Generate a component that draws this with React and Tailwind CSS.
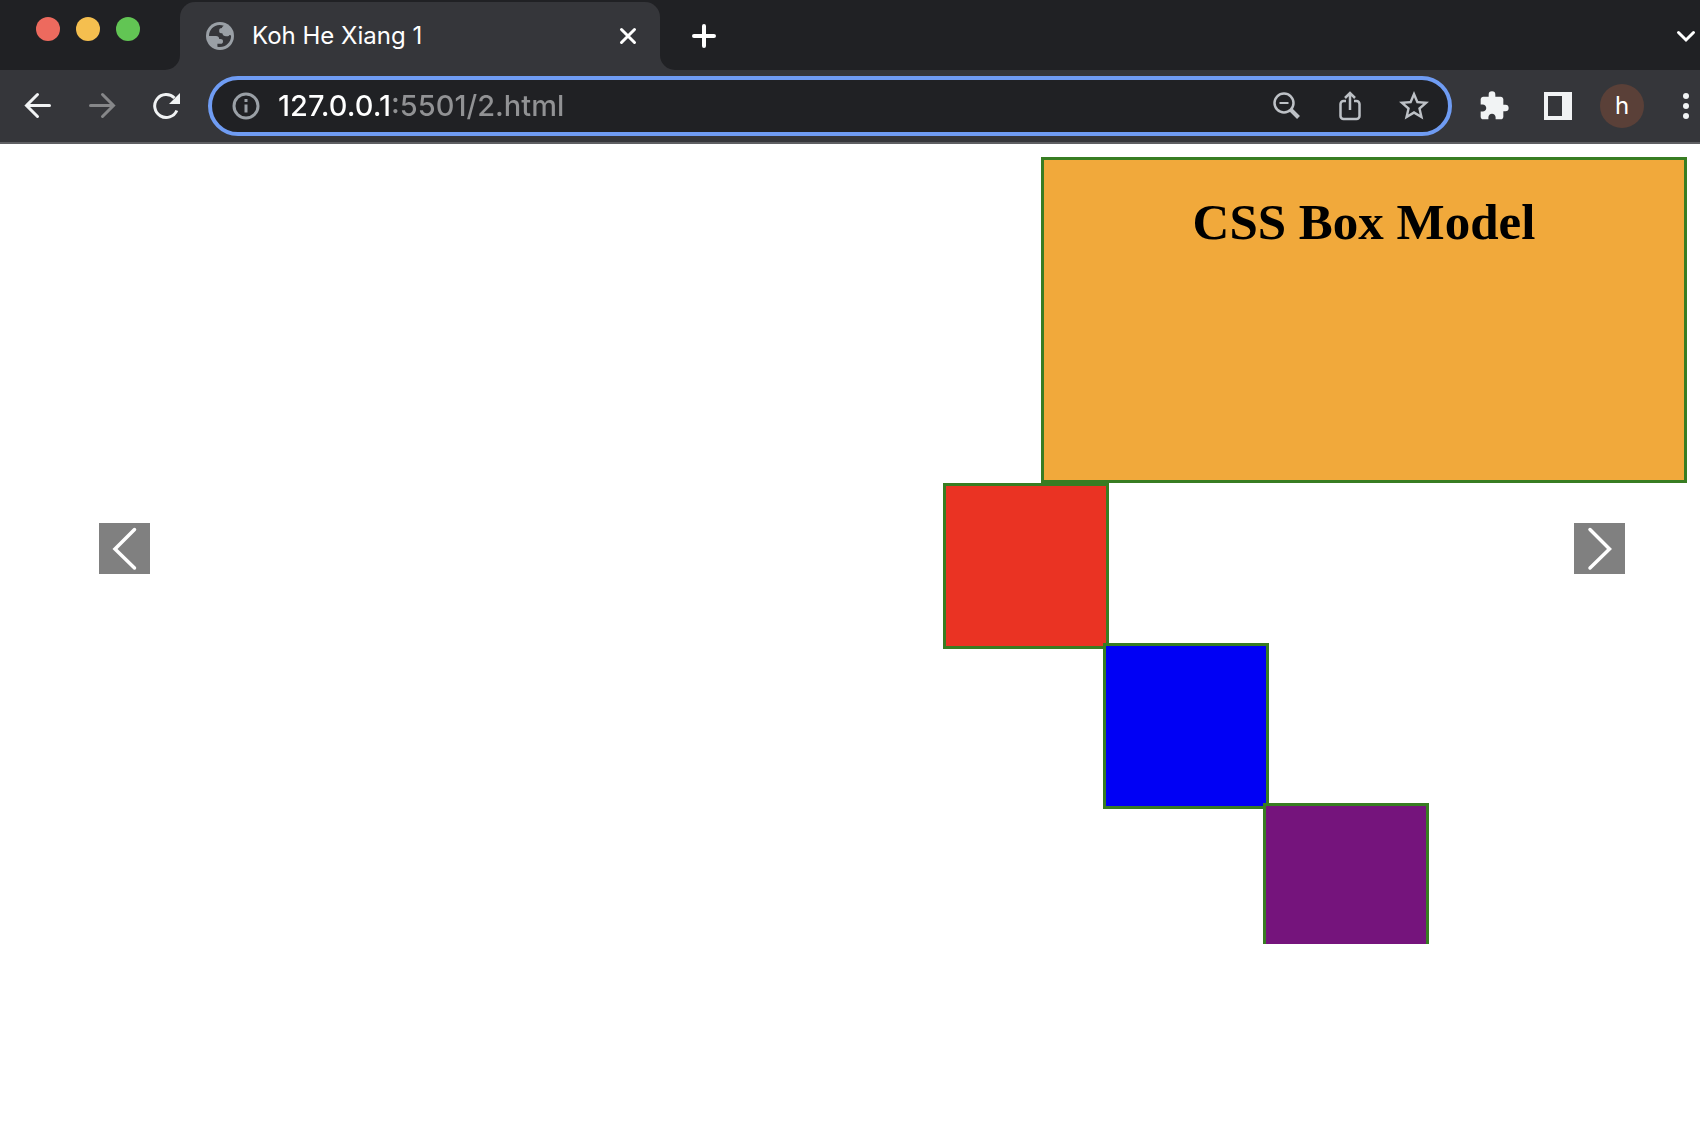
import { MdExtension, MdStarBorder } from "react-icons/md";

const iconButton = "flex shrink-0 items-center justify-center";

function Stroke({ className, children, width = 3, cap = "round", box = "0 0 32 32" }) {
  return (
    <svg
      viewBox={box}
      className={className}
      fill="none"
      stroke="currentColor"
      strokeWidth={width}
      strokeLinecap={cap}
      aria-hidden="true"
    >
      {children}
    </svg>
  );
}

function Globe() {
  return (
    <svg viewBox="0 0 28 28" className="size-7 shrink-0" aria-hidden="true">
      <circle cx="14" cy="14" r="14" fill="#9aa0a6" />
      <path
        d="M3 14C3 8 7.500 3.300 13.500 3c1.500 0 3 .2 4.300.7-1 .5-1.800 1.300-1.800 2.300-1.600 0-2.800.8-2.800 2.200v1.400c0 1 .8 1.700 1.800 1.700h1.300c.3 1.900 1.700 3 3.700 3h1.300c1 0 1.800-.6 2.200-1.400.9 0 1.500.4 1.600 1.100C25 20.300 20 25 14 25c-.9 0-1.800-.1-2.600-.3v-3h3.200c1.500 0 2.400-.9 2.400-2.300 0-1.600-.9-2.400-2.500-2.400h-1.300c0-2-1.200-3-3.200-3z"
        fill="#35363a"
      />
    </svg>
  );
}

function TabStrip() {
  return (
    <header className="flex h-[70px] items-end bg-[#202124] text-white">
      <div className="flex w-[165px] shrink-0 gap-4 self-start pl-9 pt-[17px]">
        <button aria-label="Close window" className="size-6 rounded-full bg-[#ed6a5e]" />
        <button aria-label="Minimize window" className="size-6 rounded-full bg-[#f5bf4f]" />
        <button aria-label="Zoom window" className="size-6 rounded-full bg-[#62c554]" />
      </div>
      <div className="size-[15px] shrink-0 bg-[#35363a]">
        <div className="size-full rounded-br-[15px] bg-[#202124]" />
      </div>
      <div className="flex h-[68px] w-[480px] shrink-0 items-center rounded-t-[15px] bg-[#35363a] pl-[26px] pr-5">
        <Globe />
        <span className="ml-[18px] flex-1 text-2xl">Koh He Xiang 1</span>
        <button aria-label="Close tab" className={`${iconButton} size-6`}>
          <Stroke className="size-6" box="0 0 24 24">
            <path d="M5.500 5.500l13 13M18.500 5.500l-13 13" />
          </Stroke>
        </button>
      </div>
      <div className="size-[15px] shrink-0 bg-[#35363a]">
        <div className="size-full rounded-bl-[15px] bg-[#202124]" />
      </div>
      <div className="flex h-[68px] flex-1 items-center justify-between pl-[13px]">
        <button aria-label="New tab" className={`${iconButton} size-8`}>
          <Stroke className="size-8" width={4}>
            <path d="M16 6v20M6 16h20" />
          </Stroke>
        </button>
        <button aria-label="Search tabs" className={`${iconButton} w-7`}>
          <Stroke className="size-7" box="0 0 28 28">
            <path d="M6.500 10.500l7.500 7.500 7.500-7.500" />
          </Stroke>
        </button>
      </div>
    </header>
  );
}

function Toolbar() {
  return (
    <nav className="flex h-[74px] items-center border-b-2 border-[#5f6063] bg-[#35363a] pl-[22px] text-[#f1f3f4]">
      <button aria-label="Back" className={`${iconButton} size-8`}>
        <Stroke className="size-8">
          <path d="M27.500 15.500H4.500M15.500 4.500l-11 11 11 11" />
        </Stroke>
      </button>
      <button aria-label="Forward" className={`${iconButton} ml-8 size-8 text-[#868789]`}>
        <Stroke className="size-8">
          <path d="M4.500 15.500h23M16.500 4.500l11 11-11 11" />
        </Stroke>
      </button>
      <button aria-label="Reload" className={`${iconButton} ml-8 size-8`}>
        <Stroke className="size-8" width={3} cap="butt">
          <path d="M26.800 20.500A11.500 11.500 0 1 1 24.500 8" />
          <path d="M30 3v11H19z" fill="currentColor" stroke="none" />
        </Stroke>
      </button>
      <div className="ml-[26px] flex h-[60px] flex-1 items-center rounded-full border-4 border-[#6f9cf3] bg-[#202124] pl-5 pr-[18px] text-[#bdc1c6]">
        <Stroke className="size-7 shrink-0 text-[#9aa0a6]" box="0 0 28 28" width={3} cap="butt">
          <circle cx="14" cy="14" r="12" />
          <path d="M14 12.500v8M14 7v3" />
        </Stroke>
        <input
          aria-label="Address"
          defaultValue="127.0.0.1:5501/2.html"
          className="ml-[18px] min-w-0 flex-1 bg-[linear-gradient(90deg,#fff_113px,#919294_113px)] bg-clip-text text-[29px] font-medium text-transparent caret-white outline-none"
        />
        <div className="flex items-center gap-8">
          <button aria-label="Zoom" className={`${iconButton} size-8`}>
            <Stroke className="size-8" cap="butt" width={2.5}>
              <circle cx="14" cy="13" r="9.500" />
              <path d="M9.500 13h9" strokeWidth="2" />
              <path d="M20.500 19.500l8 8" strokeWidth="4" />
            </Stroke>
          </button>
          <button aria-label="Share" className={`${iconButton} size-8`}>
            <Stroke className="size-8" cap="butt" width={2.5}>
              <path d="M12 11H9.500a3 3 0 0 0-3 3v12a3 3 0 0 0 3 3h13a3 3 0 0 0 3-3V14a3 3 0 0 0-3-3H20" />
              <path d="M16 20V3M11 8l5-5 5 5" />
            </Stroke>
          </button>
          <button aria-label="Bookmark" className={`${iconButton} size-8`}>
            <MdStarBorder className="size-9 shrink-0" />
          </button>
        </div>
      </div>
      <button aria-label="Extensions" className={`${iconButton} ml-[26px] size-8`}>
        <MdExtension className="size-8" />
      </button>
      <button aria-label="Side panel" className={`${iconButton} ml-[34px] size-7`}>
        <span className="size-7 border-4 border-r-[10px] border-[#f1f3f4]" />
      </button>
      <button
        aria-label="Profile"
        className={`${iconButton} ml-7 size-11 rounded-full bg-[#5a4038] text-2xl text-white`}
      >
        h
      </button>
      <button aria-label="Menu" className={`${iconButton} ml-7 w-7 flex-col gap-1`}>
        <span className="size-1.5 rounded-full bg-[#f1f3f4]" />
        <span className="size-1.5 rounded-full bg-[#f1f3f4]" />
        <span className="size-1.5 rounded-full bg-[#f1f3f4]" />
      </button>
    </nav>
  );
}

const square = "size-[166px] border-3 border-[#387d22]";

export default function App() {
  return (
    <div className="min-h-screen bg-white font-['Inter',sans-serif]">
      <TabStrip />
      <Toolbar />
      <main className="relative h-[800px] overflow-hidden pt-[13px]">
        <section className="mr-[13px] ml-auto h-[326px] w-[646px] border-3 border-[#387d22] bg-[#f1a93b] pt-8">
          <h1 className="text-center font-['Liberation_Serif',serif] text-[51px] leading-[60px] font-bold text-black">
            CSS Box Model
          </h1>
        </section>
        <div className="grid auto-rows-[160px] grid-cols-[160px_160px_160px] justify-end pr-[277px]">
          <div className={`${square} bg-[#ea3323]`} />
          <div className={`${square} col-start-2 row-start-2 bg-[#0000f5]`} />
          <div className={`${square} col-start-3 row-start-3 bg-[#75147c]`} />
        </div>
        <button
          aria-label="Previous slide"
          className="absolute top-[379px] left-[99px] bg-[#808080] text-white"
        >
          <Stroke className="size-[51px]" box="0 0 51 51" width={3.5}>
            <path d="M35.500 6.500l-19.500 19.500 19.500 19" />
          </Stroke>
        </button>
        <button
          aria-label="Next slide"
          className="absolute top-[379px] right-[75px] bg-[#808080] text-white"
        >
          <Stroke className="size-[51px]" box="0 0 51 51" width={3.5}>
            <path d="M16 6.500l19.500 19.500-19.500 19" />
          </Stroke>
        </button>
      </main>
    </div>
  );
}
